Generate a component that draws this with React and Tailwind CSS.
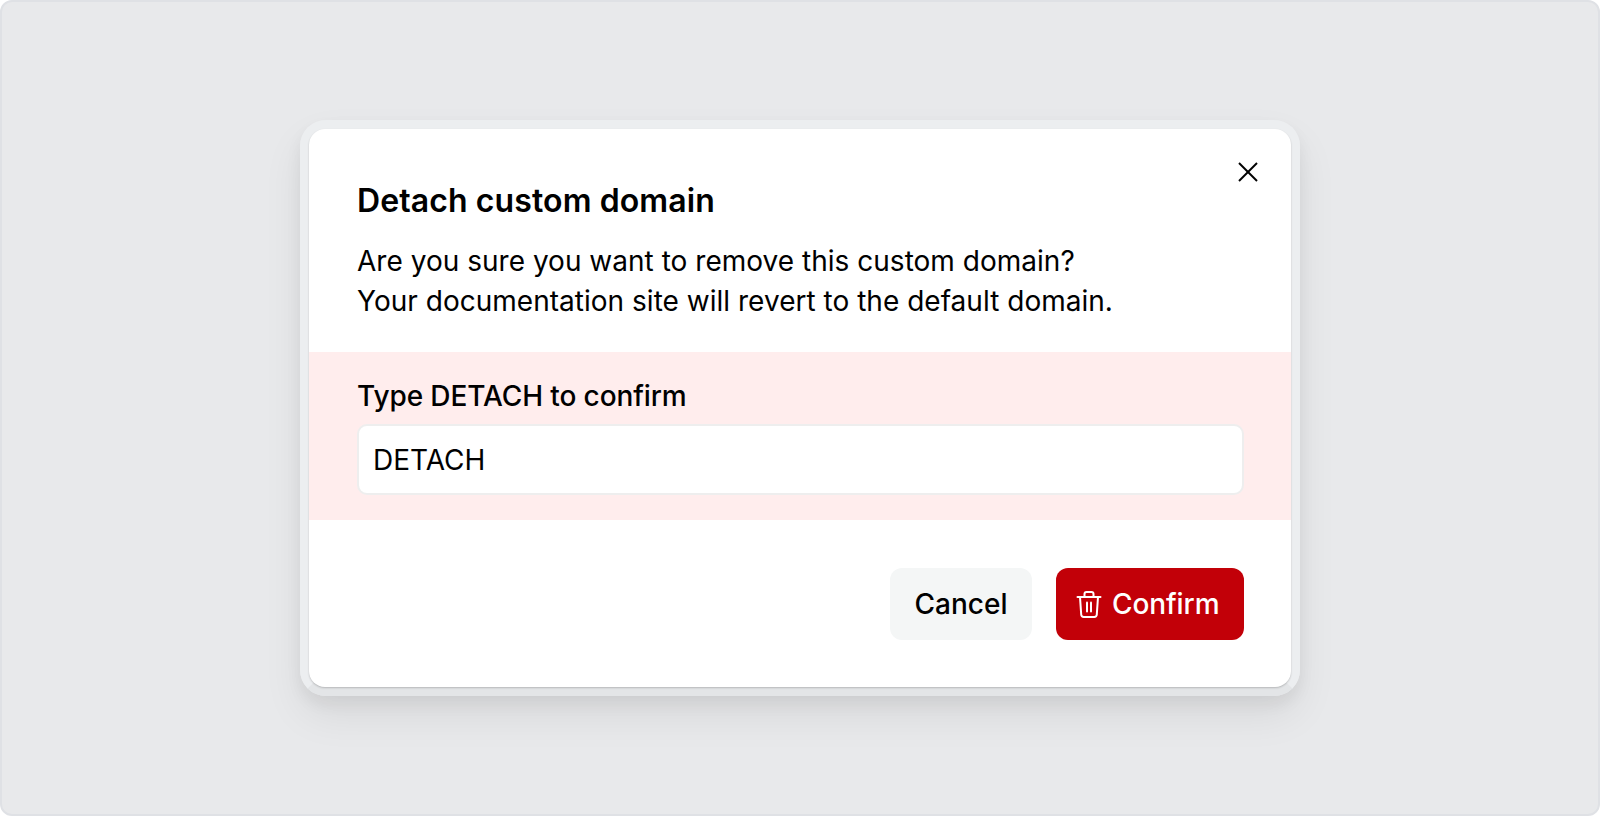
import React from "react";

function TrashIcon() {
  return (
    <svg width="28" height="28" viewBox="0 0 28 28" fill="none" stroke="currentColor" strokeWidth="2" strokeLinecap="round" strokeLinejoin="round">
      <path d="M2.5 7h23" />
      <path d="M5 7l1.2 17.4A2.5 2.5 0 0 0 8.7 27h10.6a2.5 2.5 0 0 0 2.5-2.6L23 7" />
      <path d="M9.5 7V4a2 2 0 0 1 2-2h5a2 2 0 0 1 2 2v3" />
      <path d="M12 12.5v9" />
      <path d="M16 12.5v9" />
    </svg>
  );
}

export default function App() {
  return (
    <div className="w-full h-[816px] flex items-center justify-center bg-[#e8e9eb] border-2 border-[#dfe1e5] rounded-[12px] font-['Inter',sans-serif] text-black">
      {/* Dialog */}
      <div className="relative w-[1000px] border-[9px] border-[#eceef0] border-b-[#e3e5e7] rounded-[26px] shadow-[0_8px_16px_rgba(0,0,0,0.06),0_20px_40px_rgba(0,0,0,0.07)]">
        <div className="bg-white rounded-[16px] shadow-[0_1px_2px_rgba(0,0,0,0.2)] pt-[50px] pb-[47px]">
          <button className="absolute top-[27px] right-[27px] w-[32px] h-[32px] flex items-center justify-center">
            <svg width="32" height="32" viewBox="0 0 32 32" fill="none" stroke="currentColor" strokeWidth="2">
              <path d="M7 7l18 18" />
              <path d="M25 7L7 25" />
            </svg>
          </button>
          <div className="pl-[48px] pr-[47px]">
            <h2 className="text-[32px] leading-[44px] font-semibold tracking-[0.1px]">Detach custom domain</h2>
            <p className="mt-[18px] text-[28px] leading-[40px] tracking-[0.02px]">
              Are you sure you want to remove this custom domain?
              <br />
              Your documentation site will revert to the default domain.
            </p>
          </div>

          {/* Confirmation */}
          <div className="mt-[31px] pl-[48px] pr-[47px] pt-[24px] pb-[25px] bg-[#ffeded]">
            <label className="block text-[28px] leading-[40px] font-medium tracking-[-0.1px]">Type DETACH to confirm</label>
            <div className="mt-[8px] h-[71px] flex items-center px-[14px] bg-white border-2 border-[#eeeeee] rounded-[10px] text-[28px]">DETACH</div>
          </div>

          <div className="mt-[48px] pl-[48px] pr-[47px] flex justify-end gap-[24px]">
            <button className="h-[72px] w-[142px] rounded-[12px] bg-[#f4f6f6] text-[28px] font-medium">Cancel</button>
            <button className="h-[72px] w-[188px] pl-[19px] rounded-[12px] bg-[#c20008] text-white text-[28px] font-medium tracking-[-0.1px] flex items-center gap-[9px]">
              <TrashIcon />
              Confirm
            </button>
          </div>
        </div>
      </div>
    </div>
  );
}
